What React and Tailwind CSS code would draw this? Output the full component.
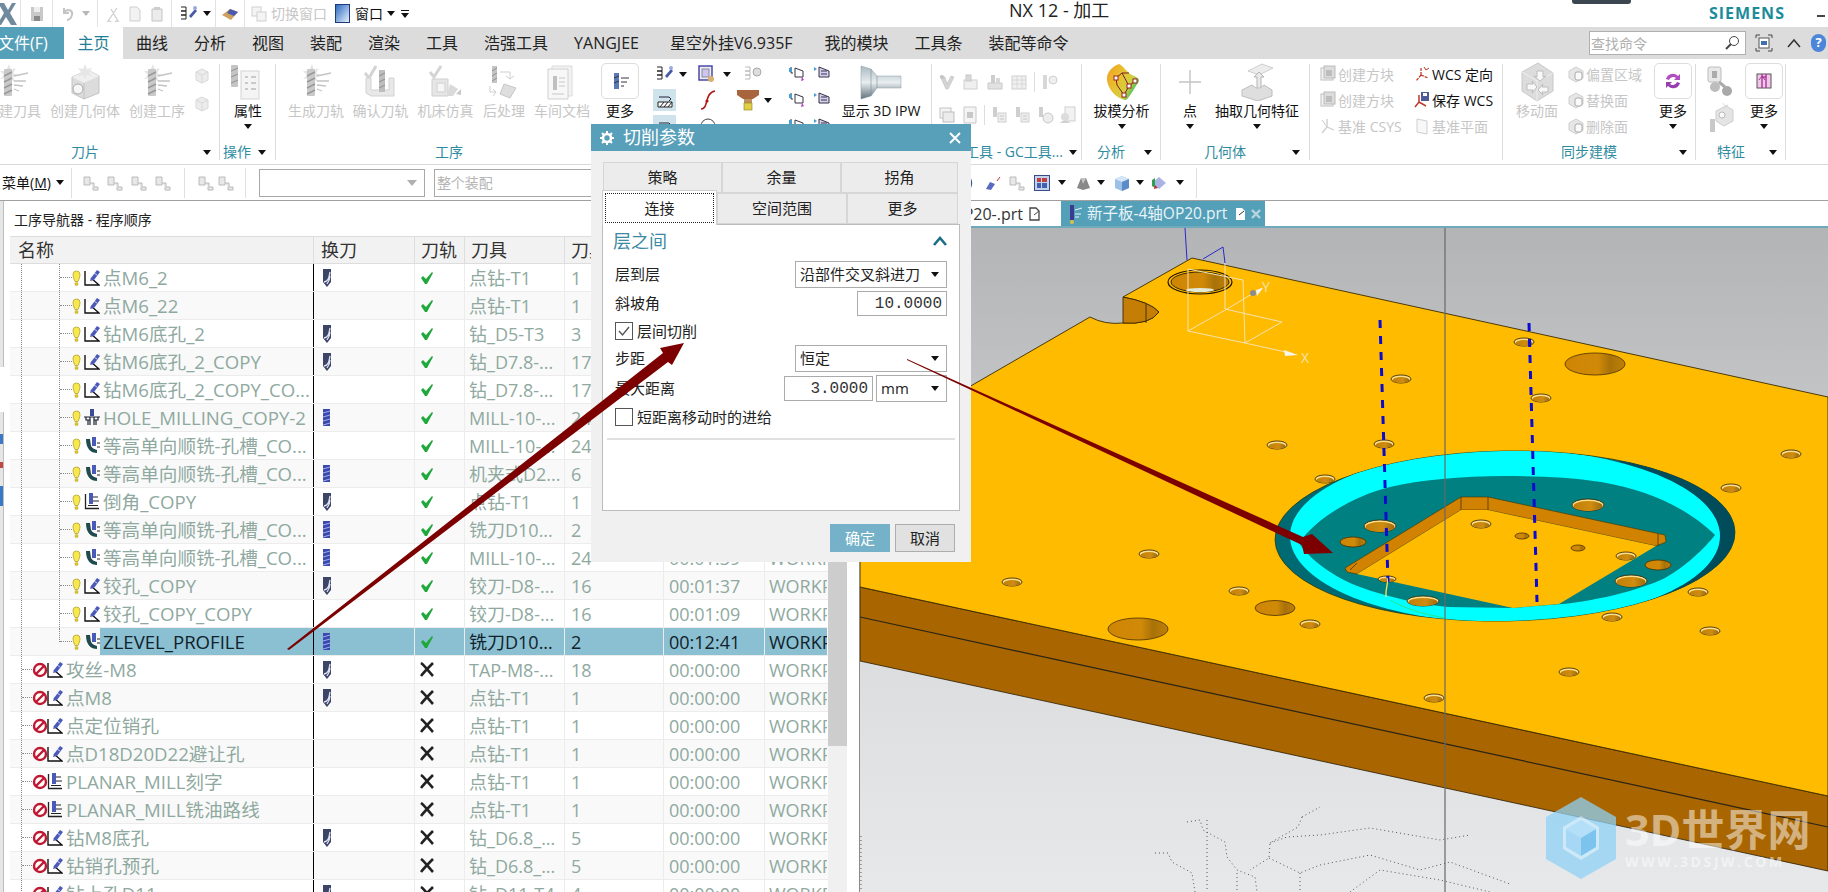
import React from 'react';

const Caret = ({ className = '' }) => (
  <span className={`inline-block shrink-0 w-0 h-0 border-x-[4px] border-x-transparent border-t-[5px] border-t-[#111] ${className}`} />
);

const S = ({ w = 16, h = 16, children }) => (
  <svg width={w} height={h} viewBox={`0 0 ${w} ${h}`} className="shrink-0 block">{children}</svg>
);

// ---- ribbon icons, most are greyed out ----
const ToolFlags = ({ spark }) => (
  <S w={36} h={36}>
    {spark && <path d="M14 0l2 6 5-2-3 5 5 2-5 2 2 5-5-3-3 5-1-6-6 1 4-4-4-4 6 0z" fill="#e4e4e4" />}
    <rect x="9" y="5" width="8" height="27" rx="1" fill="#c9c9c9" />
    <path d="M9 12l8-4M9 18l8-4M9 24l8-4M9 30l8-4" stroke="#999" strokeWidth="1.4" />
    <path d="M19 12l14-3M19 17h12M19 21l9 1M19 25l5 2" stroke="#c4c4c4" strokeWidth="1.3" fill="none" />
  </S>
);
const GeoBox = () => (
  <S w={36} h={36}>
    <path d="M5 13l16-7 11 6v17l-15 6-12-6z" fill="#dcdcdc" stroke="#c4c4c4" />
    <path d="M21 6l11 6-15 7-12-6z" fill="#efefef" />
    <path d="M17 19v16" stroke="#c4c4c4" />
    <circle cx="11" cy="25" r="5" fill="#f6f6f6" stroke="#aaa" />
    <path d="M18 0l2 5 5-1-3 4 3 4-5-1-2 4-2-4-5 1 3-4-3-4 5 1z" fill="#e6e6e6" />
  </S>
);
const ToolCheck = () => (
  <S w={36} h={36}>
    <path d="M2 9l4 5 7-12" stroke="#d4d4d4" strokeWidth="3" fill="none" />
    <path d="M3 14h5v12h18V14h5v18H8l-5-3z" fill="#e8e8e8" stroke="#d2d2d2" />
    <rect x="16" y="6" width="6" height="22" fill="#bdbdbd" />
    <path d="M16 12l6-3M16 18l6-3M16 24l6-3" stroke="#8d8d8d" />
  </S>
);
const Machine = () => (
  <S w={36} h={36}>
    <path d="M2 8l4 5 7-11" stroke="#d4d4d4" strokeWidth="3" fill="none" />
    <path d="M4 15h16v17H4z" fill="#e6e6e6" stroke="#cfcfcf" />
    <rect x="9" y="19" width="8" height="9" fill="#f5f5f5" stroke="#cfcfcf" />
    <path d="M22 20l8 5-5 7h-6z" fill="#dadada" />
    <path d="M28 30l5-5v6z" fill="#c8c8c8" />
  </S>
);
const PostProc = () => (
  <S w={36} h={36}>
    <rect x="6" y="2" width="5" height="17" fill="#c4c4c4" />
    <path d="M6 7l5-3M6 12l5-3M6 17l5-3" stroke="#919191" />
    <path d="M14 8h10v7M20 12l4 3 4-3" stroke="#cfcfcf" fill="none" />
    <path d="M18 20l12 4-6 10-10-4z" fill="#dedede" stroke="#c8c8c8" />
    <path d="M4 22v6h6M7 32l3-4-3-3" stroke="#cfcfcf" fill="none" />
  </S>
);
const DocIcon = () => (
  <S w={36} h={36}>
    <path d="M8 2h20v30H8z" fill="#f3f3f3" stroke="#dadada" />
    <path d="M4 5h20v30H4z" fill="#f7f7f7" stroke="#d0d0d0" />
    <rect x="9" y="12" width="4" height="14" fill="#c0c0c0" />
    <path d="M15 14h6M15 18h6M15 22h6M8 30h12" stroke="#c8c8c8" />
  </S>
);
const PropIcon = () => (
  <S w={36} h={36}>
    <rect x="1" y="1" width="7" height="22" rx="1" fill="#c4c4c4" />
    <path d="M1 7l7-3M1 13l7-3M1 19l7-3" stroke="#919191" />
    <rect x="11" y="7" width="18" height="28" fill="#f4f4f4" stroke="#d4d4d4" />
    <path d="M15 13h3M21 13h5M15 19h3M21 19h5M15 25h3M21 25h5" stroke="#bcbcbc" strokeWidth="1.5" />
  </S>
);
const MiniBox = ({ c = '#d8d8d8' }) => (
  <S w={18} h={18}>
    <path d="M3 6l6-3 6 3v8l-6 3-6-3z" fill="#ececec" stroke={c} />
    <path d="M3 6l6 3 6-3M9 9v8" stroke={c} fill="none" />
  </S>
);
// small disabled icons of the GC tools group
const GrayV = () => (
  <S w={18} h={18}><path d="M2 3l5 1 2 7 4-8 3 1-6 12H8z" fill="#d4d4d4" stroke="#bebebe" strokeWidth="0.6" /><circle cx="4" cy="4" r="2" fill="#c4c4c4" /></S>
);
const GrayStack = () => (
  <S w={18} h={18}><rect x="2" y="7" width="13" height="9" fill="#efefef" stroke="#d0d0d0" /><rect x="4" y="2" width="5" height="6" fill="#d8d8d8" stroke="#c8c8c8" /></S>
);
const GrayClamp = () => (
  <S w={18} h={18}><path d="M2 10h14v6H2z" fill="#e2e2e2" stroke="#c8c8c8" /><rect x="5" y="2" width="4" height="8" fill="#cdcdcd" /><rect x="10" y="5" width="4" height="5" fill="#d8d8d8" /></S>
);
const GrayTable = () => (
  <S w={18} h={18}><rect x="2" y="3" width="14" height="13" fill="#f0f0f0" stroke="#cfcfcf" /><path d="M2 7h14M2 11h14M7 3v13M12 3v13" stroke="#d8d8d8" /></S>
);
const GrayTool = () => (
  <S w={18} h={18}><rect x="2" y="2" width="4" height="14" fill="#d8d8d8" /><circle cx="12" cy="7" r="4" fill="#efefef" stroke="#cfcfcf" /></S>
);
const GrayCopy = () => (
  <S w={18} h={18}><rect x="2" y="2" width="11" height="10" fill="#f4f4f4" stroke="#c4c4c4" /><rect x="5" y="6" width="11" height="10" fill="#ececec" stroke="#bdbdbd" /></S>
);
const GrayPage = () => (
  <S w={18} h={18}><path d="M3 1h12v16H3z" fill="#f4f4f4" stroke="#c8c8c8" /><rect x="6" y="6" width="6" height="6" fill="#c8c8c8" /></S>
);
const GrayMach = () => (
  <S w={18} h={18}><rect x="3" y="1" width="4" height="10" fill="#cfcfcf" /><rect x="8" y="7" width="8" height="9" fill="#ededed" stroke="#d0d0d0" /><path d="M10 10h4M10 13h4" stroke="#c8c8c8" /></S>
);
const GrayClock = () => (
  <S w={18} h={18}><rect x="3" y="1" width="4" height="10" fill="#cfcfcf" /><circle cx="12" cy="12" r="5" fill="#ededed" stroke="#c8c8c8" /></S>
);
const GrayPeople = () => (
  <S w={18} h={18}><rect x="6" y="1" width="10" height="14" fill="#f2f2f2" stroke="#cfcfcf" /><circle cx="6" cy="11" r="4" fill="#dcdcdc" /><path d="M1 17c2-3 8-3 10 0" fill="#d0d0d0" /></S>
);
const GrayCube = () => (
  <S w={18} h={18}>
    <rect x="2" y="3" width="12" height="12" fill="#f2f2f2" stroke="#c0c0c0" />
    <rect x="5" y="1" width="11" height="12" fill="#dcdcdc" stroke="#bbb" />
    <rect x="7" y="5" width="6" height="6" fill="#bdbdbd" />
  </S>
);
const Csys = ({ on }) => (
  <S w={18} h={18}>
    <path d="M8 10V2M8 10l7 3M8 10l-5 6" stroke={on ? '#c0392b' : '#cdcdcd'} strokeWidth="1.3" strokeDasharray={on ? '3 1' : '0'} fill="none" />
    {on && <path d="M11 2l2 3 3-2" stroke="#c0392b" fill="none" />}
    {!on && <path d="M3 3l5 7" stroke="#cdcdcd" />}
  </S>
);
const SaveWcs = () => (
  <S w={18} h={18}>
    <path d="M6 11V4M6 11l7 4M6 11l-4 5" stroke="#c0392b" strokeWidth="1.5" fill="none" />
    <rect x="8" y="1" width="8" height="9" fill="#4c5a9a" />
    <rect x="10" y="2" width="4" height="3" fill="#fff" />
  </S>
);
const PlaneIcon = () => (
  <S w={18} h={18}>
    <path d="M4 2l10 2v13l-10-2z" fill="#f8f8f8" stroke="#cfcfcf" />
  </S>
);
const FaceIcon = () => (
  <S w={18} h={18}>
    <path d="M2 6l7-4 7 4v7l-7 4-7-4z" fill="#e6e6e6" stroke="#cfcfcf" />
    <rect x="8" y="7" width="7" height="8" rx="2" fill="#fafafa" stroke="#aaa" />
  </S>
);
const MoveFace = () => (
  <S w={36} h={42}>
    <path d="M3 11L19 2l15 10v18L18 40 3 30z" fill="#dcdcdc" stroke="#c8c8c8" />
    <path d="M3 11l15 9 16-8M18 20v20" stroke="#eee" fill="none" />
    <path d="M22 12v6l-3-1 6 5 6-5-3 1v-6zM12 25h6l-1-3 5 6-5 6 1-3h-6zM33 28h-6l1-3-5 6 5 5-1-3h6z" fill="#f8f8f8" stroke="#bdbdbd" transform="translate(-4 -2) scale(1)" />
  </S>
);
const Binoc = () => (
  <S w={30} h={34}>
    <rect x="3" y="3" width="13" height="15" rx="2" fill="#e8e8e8" stroke="#bcbcbc" />
    <rect x="7" y="7" width="5" height="7" fill="#ababab" />
    <circle cx="10" cy="23" r="5" fill="#bdbdbd" />
    <circle cx="22" cy="27" r="5" fill="#a9a9a9" />
    <path d="M14 18l6 5" stroke="#aaa" strokeWidth="3" />
  </S>
);
const PurpleRefresh = () => (
  <S w={20} h={20}>
    <path d="M3 8a7 7 0 0 1 12-3l2-2v6h-6l2-2a4.500 4.500 0 0 0-7 2z" fill="#b04fc0" />
    <path d="M17 12a7 7 0 0 1-12 3l-2 2v-6h6l-2 2a4.500 4.500 0 0 0 7-2z" fill="#9a3fb0" />
  </S>
);
const PinkBox = () => (
  <S w={20} h={20}>
    <rect x="3" y="3" width="14" height="14" fill="#f3c7ea" stroke="#555" />
    <path d="M8 17V6M12 17V6M8 3v3h4V3" stroke="#a33a96" strokeWidth="1.4" fill="none" />
    <path d="M5 9l3-4 3 4" stroke="#a33a96" fill="none" />
  </S>
);
const Rainbow = () => (
  <S w={36} h={38}>
    <defs>
      <linearGradient id="draft" x1="0" y1="0" x2="1" y2="0.6">
        <stop offset="0" stopColor="#f0a020" />
        <stop offset="0.45" stopColor="#e8c030" />
        <stop offset="0.75" stopColor="#d0d040" />
        <stop offset="1" stopColor="#30c060" />
      </linearGradient>
    </defs>
    <path d="M15 1c5 2 7 8 13 11 4 2 7 3 7 6-5 8-10 17-13 19C12 36 2 24 3 14 4 8 9 3 15 1z" fill="url(#draft)" />
    <path d="M12 15l6-5 7 13-5 9-7-10zM18 10l7 0M25 23l6-5" stroke="#7a2020" fill="none" />
    <g fill="#fff" stroke="#a02020">
      <rect x="10" y="13" width="4" height="4" /><rect x="23" y="21" width="4" height="4" /><rect x="18" y="30" width="4" height="4" /><rect x="29" y="16" width="4" height="4" />
    </g>
  </S>
);
const Extract = () => (
  <S w={34} h={38}>
    <path d="M8 8L22 1l11 4-14 7z" fill="#ececec" stroke="#cfcfcf" />
    <path d="M17 26V14h-3l5-5 5 5h-3v12z" fill="#e9e9e9" stroke="#b4b4b4" />
    <path d="M2 27l10-5 4 3h4l4-3 8 5v6l-14 5-16-5z" fill="#dedede" stroke="#bdbdbd" />
  </S>
);
const Ipw = () => (
  <S w={44} h={40}>
    <defs>
      <linearGradient id="ipw" x1="0" y1="0" x2="0" y2="1">
        <stop offset="0" stopColor="#a8b8c0" /><stop offset="0.5" stopColor="#e8eef0" /><stop offset="1" stopColor="#60707a" />
      </linearGradient>
    </defs>
    <path d="M2 4l10 3 6 7h24v12H18l-6 8-10 3z" fill="url(#ipw)" stroke="#8a9aa2" strokeWidth="0.5" />
    <path d="M12 7v27M18 14v12" stroke="#7e8e96" strokeWidth="0.6" />
  </S>
);

const Mini = ({ kind }) => {
  if (kind === 'tree') return (
    <S w={20} h={18}><path d="M2 3h6v8H2zM8 9h4v4h4v3h-5v-3" fill="#e8e8e8" stroke="#b4b4b4" strokeWidth="0.9" /></S>
  );
  if (kind === 'bolt') return (
    <S w={20} h={18}>
      <path d="M2 2h5v4H2M2 6h5v4H2M2 10h5v4H2" stroke="#222" fill="none" />
      <path d="M10 11l6-7 2 2-6 7z" fill="#4a5aa8" /><circle cx="16" cy="3" r="2" fill="#9aa8e0" />
    </S>
  );
  if (kind === 'boltg') return (
    <S w={20} h={18}>
      <path d="M2 2h5v4H2M2 6h5v4H2M2 10h5v4H2" stroke="#bbb" fill="none" />
      <circle cx="14" cy="7" r="4" fill="#ddd" stroke="#aaa" />
    </S>
  );
  if (kind === 'frame') return (
    <S w={20} h={20}>
      <rect x="2" y="2" width="13" height="14" fill="#eee" stroke="#4a4aa8" strokeWidth="1.5" />
      <rect x="5" y="5" width="7" height="8" fill="#cfc5ea" stroke="#88a" />
      <circle cx="14" cy="15" r="3" fill="#d8b070" />
    </S>
  );
  if (kind === 'hatch') return (
    <S w={18} h={18}>
      <path d="M3 6h10l2 2-2 2" stroke="#223" fill="none" />
      <path d="M2 11h14v5H2z" fill="#fff" stroke="#222" />
      <path d="M4 16l4-5M8 16l4-5M12 16l4-5" stroke="#222" />
    </S>
  );
  if (kind === 'curve') return (
    <S w={20} h={22}>
      <path d="M3 20c8 0 3-16 14-18" stroke="#b01818" strokeWidth="1.6" fill="none" />
      <circle cx="9" cy="12" r="1.6" fill="#b01818" />
    </S>
  );
  if (kind === 'mush') return (
    <S w={26} h={24}>
      <path d="M2 2h22v5l-6 4H8L2 7z" fill="#a8643c" />
      <rect x="9" y="11" width="8" height="4" fill="#c09060" />
      <rect x="9" y="15" width="8" height="7" fill="#e0d048" stroke="#8a8020" strokeWidth="0.6" />
    </S>
  );
  if (kind === 'flag') return (
    <S w={20} h={18}>
      <path d="M3 2v6h2M7 3l8 3v6H7z" fill="#fff" stroke="#334" />
      <path d="M1 3h3v4H1z" fill="#48a0d0" />
      <path d="M14 12l2 3-3 1z" fill="#b040c0" />
    </S>
  );
  if (kind === 'flagd') return (
    <S w={20} h={18}>
      <path d="M1 2l3 2-3 2z" fill="#48a0d0" />
      <path d="M6 2l10 4v6H6z" fill="#d8d0f0" stroke="#334" />
      <path d="M8 6h6M8 9h6" stroke="#334" />
    </S>
  );
  return null;
};

const BigBtn = ({ className = '', label, off, caret, box, children }) => (
  <div className={`flex flex-col items-center shrink-0 ${className}`}>
    <div className={`flex items-center justify-center h-[36px] ${box ? 'w-[38px] -mt-[1px] mb-[1px] border border-[#dddddd] rounded-[5px]' : ''}`}>{children}</div>
    <div className={`h-[21px] text-[14px] leading-[21px] whitespace-nowrap ${off ? 'text-[#c6c6c6]' : 'text-[#111]'}`}>{label}</div>
    {caret && <Caret className="mt-[3px]" />}
  </div>
);

const SmallRow = ({ icon, label, off }) => (
  <div className="flex items-center h-[26px]">
    <div className="w-[21px] flex justify-center -ml-[1px]">{icon}</div>
    <span className={`text-[14px] whitespace-nowrap ${off ? 'text-[#c6c6c6]' : 'text-[#111]'}`}>{label}</span>
  </div>
);

const Group = ({ className = '', label, labelClass = '', caretClass = '', noBorder, children }) => (
  <div className={`flex flex-col shrink-0 h-[96px] mt-[5px] ${noBorder ? '' : 'border-r border-[#dcdcdc]'} ${className}`}>
    <div className="flex h-[80px]">{children}</div>
    <div className="flex items-center h-[16px] overflow-hidden">
      {label && <span className={`text-[14px] leading-[16px] whitespace-nowrap text-[#2f8ca0] ${labelClass}`}>{label}</span>}
      {caretClass && <Caret className={caretClass} />}
    </div>
  </div>
);

const Sep = () => <span className="w-px h-[20px] bg-[#dddddd] shrink-0" />;

const TitleBar = () => (
  <div className="relative flex items-center h-[27px] bg-white">
    <div className="flex items-center w-[21px] h-[27px] shrink-0 border-r border-[#e2e2e2]">
      <S w={20} h={24}><path d="M-2 1h6l4 7 4-7h4l-6 10 7 12h-6l-5-8-5 8H-3l7-12z" fill="#6e8a9c" /></S>
    </div>
    <div className="w-[32px] flex justify-center border-r border-[#e2e2e2] h-[27px] items-center">
      <S w={16} h={16}><path d="M2 1h12v14H2z" fill="#c8c8c8" /><rect x="5" y="1" width="6" height="5" fill="#eee" /><rect x="5" y="10" width="6" height="5" fill="#888" /></S>
    </div>
    <div className="w-[45px] flex items-center gap-[8px] pl-[7px] border-r border-[#e2e2e2] h-[27px]">
      <S w={14} h={14}><path d="M4 5c5-4 9-1 8 3-1 3-3 5-5 5M4 1v5h5" stroke="#c4c4c4" strokeWidth="2" fill="none" /></S>
      <Caret className="opacity-30" />
    </div>
    <div className="w-[74px] flex items-center gap-[8px] pl-[8px] border-r border-[#e2e2e2] h-[27px]">
      <S w={14} h={16}><path d="M2 15L11 2M12 15L5 3M3 15a2 2 0 1 0 .1 0M11 15a2 2 0 1 0 .1 0" stroke="#cfcfcf" strokeWidth="1.3" fill="none" /></S>
      <S w={14} h={16}><path d="M2 1h7l3 3v11H2z" fill="#f2f2f2" stroke="#cfcfcf" /></S>
      <S w={14} h={16}><path d="M2 3h10v12H2z" fill="#ececec" stroke="#c4c4c4" /><rect x="4" y="1" width="6" height="3" fill="#ccc" /></S>
    </div>
    <div className="w-[44px] flex items-center pl-[7px] gap-[4px] border-r border-[#e2e2e2] h-[27px]">
      <Mini kind="bolt" /><Caret />
    </div>
    <div className="w-[29px] flex justify-center border-r border-[#e2e2e2] h-[27px] items-center">
      <S w={18} h={16}><path d="M1 9l8-6 8 3-7 8z" fill="#d0a060" /><path d="M9 3l8 3-4 4-7-3z" fill="#4a5ab0" /></S>
    </div>
    <div className="flex items-center pl-[6px]">
      <S w={16} h={16}><rect x="1" y="1" width="9" height="9" fill="#f4f4f4" stroke="#cfcfcf" /><rect x="6" y="6" width="9" height="9" fill="#f4f4f4" stroke="#cfcfcf" /></S>
      <span className="ml-[4px] text-[14px] text-[#c6c6c6] whitespace-nowrap">切换窗口</span>
      <span className="ml-[8px] w-[15px] h-[19px] border border-[#1c3a78] bg-linear-to-br from-[#2a6ac0] to-[#e8f0fa] shrink-0" />
      <span className="ml-[5px] text-[14px] text-[#111] whitespace-nowrap">窗口</span>
      <Caret className="ml-[4px]" />
      <span className="ml-[6px] flex flex-col items-center gap-[2px]"><span className="w-[8px] h-px bg-[#111]" /><Caret /></span>
    </div>
    <span className="absolute left-[1009px] top-[-3px] text-[18px] text-[#222] whitespace-nowrap">NX 12 - 加工</span>
    <span className="absolute left-[1572px] top-0 w-[59px] h-[4px] bg-[#3c4650] rounded-b-[3px]" />
    <span className="absolute left-[1709px] top-[1px] text-[16px] font-bold text-[#1b8c9c] tracking-[1px]">SIEMENS</span>
    <span className="absolute left-[1817px] top-[15px] w-[8px] h-[2px] bg-[#444]" />
  </div>
);

const TabBar = () => {
  const tabs = ['曲线', '分析', '视图', '装配', '渲染', '工具', '浩强工具'];
  return (
    <div className="flex items-center h-[32px] bg-[#dcdcdc] relative">
      <div className="w-[64px] h-[32px] bg-[#55a0b9] text-white text-[16px] leading-[32px] whitespace-nowrap overflow-hidden shrink-0"><span className="-ml-[2px] inline-block">文件(F)</span></div>
      <div className="w-[59px] h-[32px] bg-white text-[#1f7f96] text-[16px] leading-[32px] text-center shrink-0">主页</div>
      {tabs.map((t) => (
        <div key={t} className="px-[13px] text-[16px] text-[#222] whitespace-nowrap">{t}</div>
      ))}
      <div className="pl-[13px] pr-[18px] text-[16px] text-[#222] whitespace-nowrap">YANGJEE</div>
      <div className="pl-[13px] pr-[19px] text-[16px] text-[#222] whitespace-nowrap">星空外挂V6.935F</div>
      <div className="px-[13px] text-[16px] text-[#222] whitespace-nowrap">我的模块</div>
      <div className="px-[13px] text-[16px] text-[#222] whitespace-nowrap">工具条</div>
      <div className="px-[13px] text-[16px] text-[#222] whitespace-nowrap">装配等命令</div>
      <div className="ml-auto flex items-center">
        <div className="w-[157px] h-[24px] bg-white border border-[#b0b0b0] flex items-center justify-between pl-[1px] pr-[5px]">
          <span className="text-[14px] text-[#b0b0b0]">查找命令</span>
          <S w={16} h={16}><circle cx="10" cy="6" r="4.500" fill="#fff" stroke="#444" /><path d="M7 9l-5 5" stroke="#444" strokeWidth="2" /></S>
        </div>
        <div className="w-[18px] ml-[9px]">
          <S w={18} h={18}><path d="M1 4V1h4M13 1h4v3M1 14v3h4M13 17h4v-3" stroke="#444" fill="none" /><rect x="4" y="4" width="10" height="10" fill="#fff" stroke="#555" /><rect x="6" y="7" width="6" height="4" fill="#3f6fae" /></S>
        </div>
        <div className="w-[16px] ml-[13px]">
          <S w={16} h={14}><path d="M2 11l6-7 6 7" stroke="#333" strokeWidth="1.500" fill="none" /></S>
        </div>
        <div className="ml-[9px] mr-[2px] w-[15px] h-[18px] rounded-full bg-[#4d86d8] text-white text-[13px] font-bold flex items-center justify-center">?</div>
      </div>
    </div>
  );
};

const Ribbon = () => (
  <div className="flex h-[106px] bg-white border-b border-[#d8d8d8] overflow-hidden">
    <Group className="w-[220px]" label="刀片" labelClass="ml-[71px]" caretClass="ml-[104px]">
      <BigBtn className="w-[70px] -ml-[22px]" label="创建刀具" off><ToolFlags spark /></BigBtn>
      <BigBtn className="w-[74px]" label="创建几何体" off><GeoBox /></BigBtn>
      <BigBtn className="w-[70px]" label="创建工序" off><ToolFlags spark /></BigBtn>
      <div className="w-[20px] flex flex-col items-center gap-[10px] pt-[2px]"><MiniBox /><MiniBox /></div>
    </Group>
    <Group className="w-[56px]" label="操作" labelClass="ml-[3px]" caretClass="ml-[7px]">
      <BigBtn className="w-[56px]" label="属性" caret><PropIcon /></BigBtn>
    </Group>
    <Group className="w-[369px]" noBorder label="工序" labelClass="ml-[159px]">
      <BigBtn className="w-[64px] ml-[8px]" label="生成刀轨" off><ToolFlags spark /></BigBtn>
      <BigBtn className="w-[65px]" label="确认刀轨" off><ToolCheck /></BigBtn>
      <BigBtn className="w-[65px]" label="机床仿真" off><Machine /></BigBtn>
      <BigBtn className="w-[52px]" label="后处理" off><PostProc /></BigBtn>
      <BigBtn className="w-[64px]" label="车间文档" off><DocIcon /></BigBtn>
      <BigBtn className="w-[38px] ml-[7px]" label="更多" box><S w={20} h={20}><rect x="4" y="2" width="5" height="16" fill="#5a78b8" /><path d="M4 7l5-2M4 12l5-2M11 7h8M11 11h6M11 15h3" stroke="#334" /></S></BigBtn>
    </Group>
    <Group className="w-[287px]" label="">
      <div className="w-[125px] ml-[8px] flex flex-col -mt-[3px]">
        <div className="flex items-center h-[26px]">
          <div className="w-[23px] flex justify-center"><Mini kind="bolt" /></div><Caret className="ml-[3px]" />
          <div className="w-[31px] ml-[4px] flex justify-center"><Mini kind="frame" /></div><Caret className="ml-[1px]" />
          <div className="w-[32px] ml-[6px] flex justify-center"><Mini kind="boltg" /></div>
        </div>
        <div className="flex items-center h-[26px]">
          <div className="w-[23px] h-[22px] bg-[#cfe3ec] flex justify-center items-center"><Mini kind="hatch" /></div>
          <div className="w-[42px] ml-[11px] flex justify-center"><Mini kind="curve" /></div>
          <div className="w-[30px] ml-[4px] flex justify-center"><Mini kind="mush" /></div><Caret className="ml-[1px]" />
        </div>
        <div className="flex items-center h-[26px]">
          <div className="w-[23px] h-[22px] bg-[#cfe3ec] flex justify-center items-center"><Mini kind="hatch" /></div>
          <div className="w-[42px] ml-[11px] flex justify-center"><S w={18} h={18}><circle cx="9" cy="9" r="7" fill="#fff" stroke="#444" /></S></div>
        </div>
      </div>
      <div className="w-[50px] ml-[10px] flex flex-col -mt-[3px]">
        <div className="flex items-center h-[26px] gap-[5px]"><Mini kind="flag" /><Mini kind="flagd" /></div>
        <div className="flex items-center h-[26px] gap-[5px]"><Mini kind="flag" /><Mini kind="flagd" /></div>
        <div className="flex items-center h-[26px] gap-[5px]"><Mini kind="flag" /><Mini kind="flagd" /></div>
      </div>
      <BigBtn className="w-[90px] -ml-[2px]" label="显示 3D IPW"><Ipw /></BigBtn>
    </Group>
    <Group className="w-[150px]" label="工具 - GC工具..." labelClass="ml-[33px]" caretClass="ml-[6px]">
      <div className="flex flex-col pl-[6px] pt-[8px] gap-[13px]">
        <div className="flex items-center gap-[6px]">
          <GrayV /><GrayStack /><GrayClamp /><GrayTable /><Sep /><GrayTool />
        </div>
        <div className="flex items-center gap-[5px]">
          <GrayCopy /><GrayPage /><Sep /><GrayMach /><GrayMach /><GrayClock /><GrayPeople />
        </div>
      </div>
    </Group>
    <Group className="w-[79px]" label="分析" labelClass="ml-[15px]" caretClass="ml-[19px]">
      <BigBtn className="w-[79px]" label="拔模分析" caret><Rainbow /></BigBtn>
    </Group>
    <Group className="w-[149px]" label="几何体" labelClass="ml-[43px]" caretClass="ml-[46px]">
      <BigBtn className="w-[58px]" label="点" caret><S w={24} h={32}><path d="M12 4v24M1 16h22" stroke="#c4c4c4" strokeWidth="1.4" /></S></BigBtn>
      <BigBtn className="w-[76px]" label="抽取几何特征" caret><Extract /></BigBtn>
    </Group>
    <Group className="w-[193px]">
      <div className="flex -mt-[3px] ml-[8px]">
        <div className="w-[94px] flex flex-col">
          <SmallRow icon={<GrayCube />} label="创建方块" off />
          <SmallRow icon={<GrayCube />} label="创建方块" off />
          <SmallRow icon={<Csys />} label="基准 CSYS" off />
        </div>
        <div className="flex flex-col">
          <SmallRow icon={<Csys on />} label="WCS 定向" />
          <SmallRow icon={<SaveWcs />} label="保存 WCS" />
          <SmallRow icon={<PlaneIcon />} label="基准平面" off />
        </div>
      </div>
    </Group>
    <Group className="w-[193px]" label="同步建模" labelClass="ml-[58px]" caretClass="ml-[62px]">
      <BigBtn className="w-[60px] ml-[4px]" label="移动面" off><MoveFace /></BigBtn>
      <div className="w-[89px] -ml-[1px] -mt-[3px] flex flex-col">
        <SmallRow icon={<FaceIcon />} label="偏置区域" off />
        <SmallRow icon={<FaceIcon />} label="替换面" off />
        <SmallRow icon={<FaceIcon />} label="删除面" off />
      </div>
      <BigBtn className="w-[40px] -ml-[2px]" label="更多" box caret><PurpleRefresh /></BigBtn>
    </Group>
    <Group className="w-[90px]" label="特征" labelClass="ml-[21px]" caretClass="ml-[24px]">
      <div className="w-[48px] flex flex-col items-center"><Binoc /><div className="mt-[3px]"><GeoBoxSmall /></div></div>
      <BigBtn className="w-[40px]" label="更多" box caret><PinkBox /></BigBtn>
    </Group>
  </div>
);

const GeoBoxSmall = () => (
  <S w={28} h={32}>
    <path d="M10 10l10-5 7 4v11l-9 5-8-5z" fill="#e4e4e4" stroke="#cdcdcd" />
    <circle cx="16" cy="14" r="3" fill="#fafafa" stroke="#bbb" />
    <rect x="4" y="18" width="5" height="13" fill="#c8c8c8" />
    <path d="M17 2l2 3 3-1-2 3" stroke="#ddd" fill="none" />
  </S>
);

const Toolbar = () => (
  <div className="flex items-center h-[36px] bg-white border-b border-[#a0a0a0]">
    <span className="ml-[2px] text-[14px] text-[#111] whitespace-nowrap">菜单(<span className="underline">M</span>)</span>
    <Caret className="ml-[5px]" />
    <span className="ml-[7px] w-px h-[30px] bg-[#e0e0e0]" />
    <div className="flex gap-[4px] ml-[10px]"><Mini kind="tree" /><Mini kind="tree" /><Mini kind="tree" /><Mini kind="tree" /></div>
    <span className="ml-[10px] w-px h-[30px] bg-[#e0e0e0]" />
    <div className="flex gap-[0px] ml-[12px]"><Mini kind="tree" /><Mini kind="tree" /></div>
    <span className="ml-[8px] w-px h-[30px] bg-[#e0e0e0]" />
    <div className="ml-[13px] w-[166px] h-[28px] border border-[#a8a8a8] flex items-center justify-end pr-[7px]"><span className="w-0 h-0 border-x-[5px] border-x-transparent border-t-[6px] border-t-[#b0b0b0]" /></div>
    <div className="ml-[9px] w-[200px] h-[28px] border border-[#a8a8a8] pl-[2px] text-[14px] text-[#b4b4b4] leading-[26px]">整个装配</div>
    <div className="ml-[326px] flex items-center">
      <div className="w-[18px] flex justify-center"><S w={12} h={16}><path d="M3 2c6 0 7 9 2 12" stroke="#3a5a90" strokeWidth="2" fill="none" /></S></div>
      <div className="w-[30px] flex justify-center"><S w={18} h={16}><path d="M2 14l4-7 5 2-4 6z" fill="#5a6ac0" /><path d="M13 6l3-4" stroke="#c03030" /></S></div>
      <Mini kind="tree" />
      <div className="w-[16px] h-[16px] ml-[6px] bg-[#c4d2ec] border border-[#384c8a] grid grid-cols-2 gap-px p-[2px]"><span className="bg-[#c04040]" /><span className="bg-[#c04040]" /><span className="bg-[#4060b0]" /><span className="bg-[#4060b0]" /></div>
      <Caret className="ml-[8px]" />
      <div className="ml-[8px]"><S w={18} h={16}><path d="M3 13l4-10h5l4 10-7 2z" fill="#888" /><path d="M7 3l5 0-3 6z" fill="#c4c4c4" /></S></div>
      <Caret className="ml-[5px]" />
      <div className="ml-[8px]"><S w={18} h={18}><path d="M2 5l7-3 7 3v9l-7 3-7-3z" fill="#9cc0e8" /><path d="M2 5l7 3 7-3-7-3z" fill="#d6e6f6" /><path d="M9 8v9l7-3V5z" fill="#5c8cc8" /></S></div>
      <Caret className="ml-[5px]" />
      <div className="ml-[6px]"><S w={18} h={16}><path d="M9 2l7 6-7 6-7-6z" fill="#aab4e4" /><path d="M2 5l3-2v10l-3-2z" fill="#30a050" /><path d="M5 10l3 3-4 1z" fill="#c03030" /></S></div>
      <Caret className="ml-[8px]" />
      <span className="ml-[12px] w-px h-[30px] bg-[#e0e0e0]" />
    </div>
  </div>
);

// ---- operation navigator ----
const Bulb = () => (
  <S w={9} h={16}><path d="M1 4.500a3.500 3.500 0 1 1 7 0c0 2-1 5-2 7H3c-1-2-2-5-2-7z" fill="#f8e850" stroke="#a89818" strokeWidth="0.7" /><circle cx="4.500" cy="14" r="1.600" fill="#e8c820" stroke="#a89818" strokeWidth="0.5" /></S>
);
const NoEntry = () => (
  <S w={16} h={16}><circle cx="8" cy="8" r="6" fill="#fff" stroke="#c01830" strokeWidth="2.400" /><path d="M3.500 12.500l9-9" stroke="#c01830" strokeWidth="2.400" /></S>
);
const OpIcon = ({ kind }) => {
  if (kind === 'hole') return (
    <S w={16} h={17}>
      <rect x="6" y="0" width="4" height="7" fill="#3a4a9a" />
      <path d="M0 8h16M2 8v3h4M14 8v3h-4M4 11v5M12 11v5M6 8v8M10 8v8" stroke="#1a2030" strokeWidth="1.200" fill="none" />
    </S>
  );
  if (kind === 'z') return (
    <S w={16} h={17}>
      <path d="M2 2h4l1 7c1 2 3 3 6 4v3c-6 0-11-4-11-14z" fill="#1f4a50" />
      <rect x="8" y="0" width="4" height="9" fill="#4a5ab8" />
      <path d="M13 6h3M13 10h3" stroke="#222" />
    </S>
  );
  if (kind === 'planar') return (
    <S w={16} h={17}>
      <path d="M1.500 1v14.500H15" stroke="#222" strokeWidth="1.300" fill="none" />
      <rect x="5" y="0" width="4" height="11" fill="#4a5ab8" />
      <path d="M9 4h5M9 8h6M4 12.500h10" stroke="#222" />
    </S>
  );
  return (
    <S w={16} h={17}>
      <path d="M1 2v14h14L7 9" stroke="#111" strokeWidth="1.400" fill="#fff" />
      <path d="M7 9L13 1l3 2-6 8-4 1z" fill="#4a5ab8" />
      <path d="M10 4l3 2" stroke="#c8d0f0" />
    </S>
  );
};
const ToolChange = ({ kind }) => {
  if (kind === 'mill') return (
    <S w={9} h={17}><rect x="1" y="0" width="7" height="17" fill="#3a48b0" /><path d="M1 4l7-2M1 8l7-2M1 12l7-2M1 16l7-2" stroke="#a0aee8" /></S>
  );
  return (
    <S w={10} h={18}><path d="M1 0h8v13l-4 5-4-5z" fill="#3c4468" /><path d="M2 13c5-1 5-5 6-10M5 15c2-3 3-6 3-8" stroke="#dfe3f2" strokeWidth="1.300" fill="none" /></S>
  );
};
const Check = () => (
  <S w={14} h={14}><path d="M1 7l2-2 3 3 6-7 1 1-6 11H5z" fill="#1fa83c" /></S>
);
const Cross = () => (
  <S w={14} h={15}><path d="M1 1c3 2 9 10 12 13M13 1C9 5 4 10 1 14" stroke="#222" strokeWidth="2.600" fill="none" /></S>
);

const rows = [
  { n: '点M6_2', i: 'drill', c: 'drill', t: '点钻-T1', q: '1', d: '00:00:11', nest: true, ok: true },
  { n: '点M6_22', i: 'drill', t: '点钻-T1', q: '1', d: '00:00:11', nest: true, ok: true },
  { n: '钻M6底孔_2', i: 'drill', c: 'drill', t: '钻_D5-T3', q: '3', d: '00:00:35', nest: true, ok: true },
  { n: '钻M6底孔_2_COPY', i: 'drill', c: 'drill', t: '钻_D7.8-...', q: '17', d: '00:00:35', nest: true, ok: true },
  { n: '钻M6底孔_2_COPY_CO...', i: 'drill', t: '钻_D7.8-...', q: '17', d: '00:00:35', nest: true, ok: true },
  { n: 'HOLE_MILLING_COPY-2', i: 'hole', c: 'mill', t: 'MILL-10-...', q: '24', d: '00:01:02', nest: true, ok: true },
  { n: '等高单向顺铣-孔槽_CO...', i: 'z', t: 'MILL-10-...', q: '24', d: '00:01:39', nest: true, ok: true },
  { n: '等高单向顺铣-孔槽_CO...', i: 'z', c: 'mill', t: '机夹式D2...', q: '6', d: '00:01:39', nest: true, ok: true },
  { n: '倒角_COPY', i: 'planar', c: 'drill', t: '点钻-T1', q: '1', d: '00:00:40', nest: true, ok: true },
  { n: '等高单向顺铣-孔槽_CO...', i: 'z', c: 'mill', t: '铣刀D10...', q: '2', d: '00:01:39', nest: true, ok: true },
  { n: '等高单向顺铣-孔槽_CO...', i: 'z', c: 'mill', t: 'MILL-10-...', q: '24', d: '00:01:39', nest: true, ok: true },
  { n: '铰孔_COPY', i: 'drill', c: 'drill', t: '铰刀-D8-...', q: '16', d: '00:01:37', nest: true, ok: true },
  { n: '铰孔_COPY_COPY', i: 'drill', t: '铰刀-D8-...', q: '16', d: '00:01:09', nest: true, ok: true },
  { n: 'ZLEVEL_PROFILE', i: 'z', c: 'mill', t: '铣刀D10...', q: '2', d: '00:12:41', nest: true, ok: true, sel: true },
  { n: '攻丝-M8', i: 'drill', c: 'drill', t: 'TAP-M8-...', q: '18' },
  { n: '点M8', i: 'drill', c: 'drill', t: '点钻-T1', q: '1' },
  { n: '点定位销孔', i: 'drill', t: '点钻-T1', q: '1' },
  { n: '点D18D20D22避让孔', i: 'drill', t: '点钻-T1', q: '1' },
  { n: 'PLANAR_MILL刻字', i: 'planar', t: '点钻-T1', q: '1' },
  { n: 'PLANAR_MILL铣油路线', i: 'planar', t: '点钻-T1', q: '1' },
  { n: '钻M8底孔', i: 'drill', c: 'drill', t: '钻_D6.8_...', q: '5' },
  { n: '钻销孔预孔', i: 'drill', t: '钻_D6.8_...', q: '5' },
  { n: '钻上孔D11', i: 'drill', c: 'drill', t: '钻_D11-T4', q: '4' },
];

const Row = ({ r, idx }) => {
  const txt = r.sel ? 'text-[#10222a]' : 'text-[#8fa9a0]';
  const cell = `h-full flex items-center border-r border-[#ececec] shrink-0 overflow-hidden ${r.sel ? 'bg-[#8bbfd2]' : ''}`;
  return (
    <div className={`flex h-[28px] shrink-0 border-b border-[#ececec] text-[18px] leading-[28px] whitespace-nowrap ${idx % 2 ? 'bg-[#f9f9f9]' : 'bg-white'}`}>
      <div className="w-[304px] h-full flex items-center shrink-0 border-r border-black overflow-hidden text-[18.600px]">
        {r.nest ? (
          <>
            <span className="w-[12px] h-full border-r border-dotted border-[#888] shrink-0" />
            <span className={`w-[38px] border-r border-dotted border-[#888] shrink-0 ${idx === 13 ? 'h-1/2 self-start' : 'h-full'}`} />
            <span className="w-[12px] border-t border-dotted border-[#888] shrink-0" />
            <Bulb />
            <span className="ml-[3px]"><OpIcon kind={r.i} /></span>
            <span className={`h-full flex-1 pl-[3px] ${r.sel ? 'bg-[#8bbfd2]' : ''} ${txt}`}>{r.n}</span>
          </>
        ) : (
          <>
            <span className="w-[12px] h-full border-r border-dotted border-[#888] shrink-0" />
            <span className="w-[10px] border-t border-dotted border-[#888] shrink-0" />
            <NoEntry />
            <span className="-ml-[1px]"><OpIcon kind={r.i} /></span>
            <span className={`pl-[3px] ${txt}`}>{r.n}</span>
          </>
        )}
      </div>
      <div className={`${cell} w-[101px] pl-[8px]`}>{r.c && <ToolChange kind={r.c} />}</div>
      <div className={`${cell} w-[50px] pl-[5px]`}>{r.ok ? <Check /> : <Cross />}</div>
      <div className={`${cell} w-[100px] pl-[4px] ${txt}`}>{r.t}</div>
      <div className={`${cell} w-[99px] pl-[6px] ${txt}`}>{r.q}</div>
      <div className={`${cell} w-[101px] pl-[5px] ${txt}`}>{r.d || '00:00:00'}</div>
      <div className={`${cell} w-[62px] pl-[4px] border-r-0 ${txt}`}>WORKPIECE</div>
    </div>
  );
};

const Navigator = () => (
  <div className="w-[860px] h-[691px] shrink-0 flex bg-white border-r border-[#8a8a8a] overflow-hidden">
    <div className="w-[10px] shrink-0 flex flex-col">
      <div className="w-[4px] h-[166px] bg-[#e6e6e6] border-r border-[#bdbdbd]" />
      <div className="h-[45px]" />
      <div className="w-[4px] h-[480px] bg-[#e6e6e6] border-r border-[#bdbdbd] flex flex-col gap-[18px] pt-[22px]">
        <span className="h-[10px] bg-[#3a78c8]" />
        <span className="h-[6px] bg-[#c04a40]" />
        <span className="h-[20px] bg-[#3a78c8]" />
      </div>
    </div>
    <div className="w-[818px] shrink-0 flex flex-col">
      <div className="h-[35px] shrink-0 pl-[4px] text-[14px] leading-[38px] text-[#222]">工序导航器 - 程序顺序</div>
      <div className="h-[28px] shrink-0 flex items-center bg-[#f2f2f2] border-y border-[#dddddd] text-[18px] text-[#333] whitespace-nowrap">
        <div className="w-[304px] pl-[8px] shrink-0 border-r border-[#dddddd]">名称</div>
        <div className="w-[101px] pl-[7px] shrink-0 border-r border-[#dddddd]">换刀</div>
        <div className="w-[50px] pl-[6px] shrink-0 border-r border-[#dddddd]">刀轨</div>
        <div className="w-[100px] pl-[6px] shrink-0 border-r border-[#dddddd]">刀具</div>
        <div className="w-[99px] pl-[6px] shrink-0 border-r border-[#dddddd]">刀具号</div>
        <div className="w-[101px] pl-[6px] shrink-0 border-r border-[#dddddd]">时间</div>
        <div className="w-[62px] pl-[4px] shrink-0">几何体</div>
      </div>
      {rows.map((r, i) => <Row key={i} r={r} idx={i} />)}
    </div>
    <div className="w-[19px] shrink-0 ml-0 mt-[63px] bg-[#f0f0f0] flex flex-col">
      <div className="h-[482px] bg-[#cdcdcd]" />
    </div>
  </div>
);

// ---- graphics window, coordinates are page pixels because of the viewBox ----
const Hole = ({ x, y, rx = 10, ry = 4 }) => (
  <g>
    <ellipse cx={x} cy={y} rx={rx} ry={ry} fill="#ffe08a" stroke="#2a1c00" strokeWidth="0.8" />
    <ellipse cx={x} cy={y + 1} rx={rx - 1.500} ry={ry - 1} fill="url(#holeG)" />
  </g>
);
const BigHole = ({ x, y, rx, ry }) => (
  <ellipse cx={x} cy={y} rx={rx} ry={ry} fill="url(#holeB)" stroke="#4a3000" strokeWidth="0.8" />
);

const Scene = () => (
  <svg width="968" height="664" viewBox="860 228 968 664" className="block">
    <defs>
      <linearGradient id="holeG" x1="0" y1="0" x2="1" y2="0">
        <stop offset="0" stopColor="#c08008" /><stop offset="0.6" stopColor="#d08c10" /><stop offset="1" stopColor="#9a6c10" />
      </linearGradient>
      <linearGradient id="holeB" x1="0" y1="0" x2="1" y2="0">
        <stop offset="0" stopColor="#cf8504" /><stop offset="0.55" stopColor="#d08a08" /><stop offset="0.75" stopColor="#a87208" /><stop offset="1" stopColor="#c08008" />
      </linearGradient>
      <clipPath id="outerClip"><ellipse cx="1505" cy="536" rx="230" ry="85" transform="rotate(-1 1505 536)" /></clipPath>
    </defs>

    {/* dotted leftovers on the background */}
    <g fill="none" stroke="#555" strokeWidth="1" strokeDasharray="1 3">
      <path d="M861 836V892" />
      <path d="M1187 822L1200 820 1203 830 1225 842 1227 857 1237 870 1255 877 1257 892" />
      <path d="M1302 817L1320 807M1302 817L1298 827 1270 843 1269 858 1250 870" />
      <path d="M1270 843L1287 837 1320 835 1370 828 1440 840 1470 835" />
      <path d="M1155 853L1168 853 1172 862 1192 873 1195 892" />
      <path d="M1237 873V892M1269 858L1300 873 1320 865 1370 855 1420 870 1450 862 1510 884" />
      <path d="M1300 873V892M1350 892L1380 870 1440 880 1490 892" />
      <path d="M1207 820L1207 892" />
    </g>

    {/* side of the plate */}
    <path d="M860 587L1828 796V871L860 661Z" fill="#a86500" stroke="#2a1c00" strokeWidth="0.8" />
    <path d="M860 617L1828 827" stroke="#2a2418" strokeWidth="1.200" />

    {/* top face */}
    <path d="M860 450L1090 317Q1105 325 1123 323Q1150 325 1159 312Q1150 302 1123 297L1192 258L1828 397V796L860 587Z" fill="#ffbb00" stroke="#3a2a00" strokeWidth="0.9" />
    <path d="M1123 297Q1150 302 1159 312Q1150 325 1123 323Z" fill="#c47e06" stroke="#2a1c00" strokeWidth="0.8" />
    <path d="M1146 304V323" stroke="#2a1c00" strokeWidth="0.8" />

    <ellipse cx="1200" cy="282" rx="32" ry="12" fill="#ffbb00" stroke="#1a1200" strokeWidth="1.200" />
    <ellipse cx="1200" cy="282" rx="29" ry="10" fill="url(#holeB)" stroke="#3a2a00" />
    <ellipse cx="1200" cy="290" rx="14" ry="2" fill="#e4ead8" />

    {/* circular pocket */}
    <ellipse cx="1505" cy="536" rx="230" ry="85" fill="#006a72" stroke="#2a3a10" strokeWidth="0.8" transform="rotate(-1 1505 536)" />
    <g clipPath="url(#outerClip)">
      <rect x="1620" y="440" width="120" height="190" fill="#004c5a" />
      <ellipse cx="1505" cy="536" rx="215" ry="87" fill="#00ffff" />
    </g>
    <path d="M1715 535C1690 510 1650 490 1601 482C1570 477 1535 476 1505 476C1460 476 1420 480 1390 487C1350 497 1315 520 1299 543C1310 560 1335 578 1360 587C1390 598 1420 604 1448 607L1513 608L1563 604C1600 600 1640 590 1665 578C1685 567 1705 548 1715 535Z" fill="#008080" />
    <path d="M1345 568L1461 497H1488L1665 535L1666 542L1656 546L1488 510H1461L1357 574L1347 572Z" fill="#d08200" stroke="#4a3000" strokeWidth="0.6" />
    <path d="M1461 497V510M1488 497V510M1658 534V546M1350 570L1357 563" stroke="#3a2a00" strokeWidth="0.7" />
    <path d="M1357 574L1461 510H1488L1656 546L1559 604L1513 608Z" fill="#ffbb00" />

    <Hole x={1380} y={526} rx={16} ry={6} />
    <BigHole x={1353} y={542} rx={13} ry={5} />
    <Hole x={1588} y={505} rx={16} ry={6} />
    <Hole x={1481} y={524} rx={10} ry={4} />
    <BigHole x={1522} y={536} rx={7} ry={3} />
    <BigHole x={1578} y={548} rx={7} ry={3} />
    <Hole x={1626} y={556} rx={10} ry={4} />
    <BigHole x={1658} y={565} rx={13} ry={5} />
    <Hole x={1631} y={581} rx={16} ry={6} />
    <Hole x={1423} y={601} rx={16} ry={5} />
    <Hole x={1387} y={579} rx={9} ry={3} />

    <Hole x={1277} y={445} /><Hole x={1384} y={444} /><Hole x={1325} y={479} /><Hole x={1731} y={488} />
    <Hole x={1239} y={591} /><Hole x={1310} y={624} /><Hole x={1698} y={592} /><Hole x={1612} y={617} />
    <Hole x={1710} y={631} /><Hole x={1569} y={672} /><Hole x={1434} y={698} /><Hole x={1401} y={379} />
    <Hole x={1524} y={342} /><Hole x={1541} y={398} /><Hole x={1791} y={454} /><Hole x={1149} y={554} />
    <Hole x={1012} y={582} />
    <BigHole x={1595} y={364} rx={30} ry={11} />
    <BigHole x={1138} y={629} rx={30} ry={11} />
    <BigHole x={1275} y={608} rx={20} ry={7.500} />

    {/* tool axis, dashed */}
    <path d="M1380 320L1388 582" stroke="#0a0ad0" strokeWidth="3" strokeDasharray="8 8" />
    <path d="M1529 323L1537 602" stroke="#0a0ad0" strokeWidth="3" strokeDasharray="8 8" />
    <path d="M1387 578c2 6-2 10-1 19" stroke="#f0e060" strokeWidth="1.400" fill="none" />
    <path d="M1390 600Q1410 612 1445 618" stroke="#30e070" strokeWidth="0.8" fill="none" />

    {/* WCS */}
    <g fill="none" stroke="#f6e2b0" strokeWidth="1">
      <path d="M1188 269L1243 280L1245 343L1188 331Z" />
      <path d="M1225 263V309L1282 322L1245 343M1227 309L1188 331" />
      <path d="M1227 309L1262 288M1245 343L1290 353" />
    </g>
    <path d="M1185 228L1187 260M1203 259L1223 247L1225 263" stroke="#2828c8" fill="none" />
    <circle cx="1253" cy="293" r="3" fill="#8c8c8c" />
    <path d="M1256 290L1263 288L1257 296Z" fill="#f4f4f4" />
    <path d="M1284 350L1298 355L1285 356Z" fill="#f8f6ec" />
    <text x="1301" y="363" fontSize="14" fill="#f6e2b0" fontFamily="Open Sans, sans-serif">X</text>
    <text x="1262" y="292" fontSize="14" fill="#f6e2b0" fontFamily="Open Sans, sans-serif">Y</text>

    <path d="M1445 228V892" stroke="#686868" strokeWidth="1.200" />
  </svg>
);

const Watermark = () => (
  <div className="absolute left-[686px] top-[569px] flex items-center">
    <svg width="70" height="82" viewBox="0 0 70 82" className="shrink-0 block">
      <path d="M35 0L70 20V62L35 82L0 62V20Z" fill="#8fd2f6" fillOpacity="0.75" />
      <path d="M35 19L53 30V52L35 63L17 52V30Z" fill="#fff" fillOpacity="0.45" />
      <path d="M35 23L50 32L35 41L20 32Z" fill="#b4dff8" />
      <path d="M20 32L35 41V59L20 50Z" fill="#a6d8f6" />
      <path d="M50 32L35 41V59L50 50Z" fill="#7cc4ee" />
    </svg>
    <div className="ml-[9px] flex flex-col text-white/50 font-bold whitespace-nowrap">
      <span className="text-[43px] leading-[48px]">3D世界网</span>
      <span className="text-[14px] leading-[16px] tracking-[2.600px]">WWW.3DSJW.COM</span>
    </div>
  </div>
);

const Graphics = () => (
  <div className="flex-1 flex flex-col">
    <div className="flex h-[25px] bg-white">
      <div className="w-[201px] flex items-center justify-end pr-[21px] text-[16px] text-[#333] whitespace-nowrap overflow-hidden">
        <span>新子板-4轴OP20-.prt</span>
        <span className="ml-[5px]"><S w={12} h={14}><path d="M2 1h6l3 3v9H2z" fill="#fff" stroke="#444" strokeWidth="1.300" /><path d="M6 8l5-4" stroke="#444" /></S></span>
      </div>
      <div className="w-[204px] flex items-center bg-[#55a0b9] text-[15.500px] text-[#e8f4f8] whitespace-nowrap pl-[6px]">
        <S w={16} h={20}><rect x="3" y="1" width="4" height="15" fill="#3a3a90" /><path d="M8 6l7-2M8 10h6M8 13h4" stroke="#e8f4f8" /><circle cx="5" cy="18" r="2" fill="#e0c040" /></S>
        <span className="ml-[4px]">新子板-4轴OP20.prt</span>
        <span className="ml-[7px]"><S w={12} h={14}><path d="M2 1h6l3 3v9H2z" fill="#fff" /><path d="M5 8l5-4" stroke="#333" /></S></span>
        <span className="ml-[5px]"><S w={10} h={10}><path d="M1 1l8 8M9 1L1 9" stroke="#b8d4de" strokeWidth="2.400" /></S></span>
      </div>
    </div>
    <div className="h-[2px] bg-[#6fa9bb]" />
    <div className="relative h-[664px] bg-linear-to-b from-[#b3b4b6] via-[#dcddde] via-65% to-[#e7e8ea] overflow-hidden">
      <Scene />
      <Watermark />
    </div>
  </div>
);

// ---- cut parameters dialog ----
const Select = ({ className = '', children }) => (
  <div className={`h-[27px] bg-white border border-[#ababab] flex items-center justify-between pl-[4px] pr-[7px] text-[15px] text-[#222] ${className}`}>
    <span>{children}</span>
    <span className="w-0 h-0 border-x-[4px] border-x-transparent border-t-[5px] border-t-[#111]" />
  </div>
);
const NumInput = ({ className = '', children }) => (
  <div className={`h-[25px] bg-white border border-[#ababab] flex items-center justify-end pr-[4px] text-[16px] text-[#333] font-['Liberation_Mono',monospace] ${className}`}>{children}</div>
);
const Box = ({ checked }) => (
  <span className="w-[18px] h-[18px] shrink-0 border border-[#555] bg-white flex items-center justify-center">
    {checked && <S w={14} h={14}><path d="M2 7l3.500 4L12 3" stroke="#555" strokeWidth="1.400" fill="none" /></S>}
  </span>
);
const DlgTab = ({ className = '', children }) => (
  <div className={`h-full flex items-center justify-center bg-[#ececec] border border-[#d6d6d6] text-[15px] text-[#222] ${className}`}>{children}</div>
);

const Dialog = () => (
  <div className="absolute left-[591px] top-[124px] w-[380px] h-[438px] bg-[#f0f0f0] flex flex-col">
    <div className="h-[27px] bg-[#589fba] flex items-center pl-[9px] pr-[10px] shrink-0">
      <S w={14} h={14}>
        <circle cx="7" cy="7" r="4" fill="none" stroke="#fff" strokeWidth="2.600" />
        <path d="M7 0v2.500M7 11.500V14M0 7h2.500M11.500 7H14M2 2l2 2M10 10l2 2M12 2l-2 2M4 10l-2 2" stroke="#fff" strokeWidth="2" />
      </S>
      <span className="ml-[9px] text-[18px] text-white leading-[27px]">切削参数</span>
      <span className="ml-auto"><S w={12} h={12}><path d="M1 1l10 10M11 1L1 11" stroke="#fff" strokeWidth="2" /></S></span>
    </div>
    <div className="flex h-[31px] mt-[11px] ml-[12px] shrink-0">
      <DlgTab className="w-[119px]">策略</DlgTab>
      <DlgTab className="w-[119px]">余量</DlgTab>
      <DlgTab className="w-[117px]">拐角</DlgTab>
    </div>
    <div className="flex h-[31px] ml-[11px] shrink-0">
      <div className="w-[115px] h-[35px] -mt-[3px] bg-white border border-[#cfcfcf] border-b-0 p-[2px] z-10 shrink-0">
        <div className="h-full border border-dotted border-[#222] flex items-center justify-center text-[15px] text-[#222]">连接</div>
      </div>
      <DlgTab className="w-[130px]">空间范围</DlgTab>
      <DlgTab className="w-[111px]">更多</DlgTab>
    </div>
    <div className="ml-[11px] w-[358px] h-[287px] bg-white border border-[#bcbcbc] shrink-0 flex flex-col">
      <div className="h-[32px] flex items-center justify-between pl-[10px] pr-[11px] shrink-0">
        <span className="text-[18px] text-[#3c89a3]">层之间</span>
        <S w={16} h={12}><path d="M2 10l6-7 6 7" stroke="#1c6d86" strokeWidth="2.600" fill="none" /></S>
      </div>
      <div className="flex items-center justify-between h-[27px] mt-[4px] pl-[12px] pr-[12px] shrink-0 text-[15px] text-[#222]">
        <span>层到层</span><Select className="w-[152px]">沿部件交叉斜进刀</Select>
      </div>
      <div className="flex items-center justify-between h-[25px] mt-[3px] pl-[12px] pr-[12px] shrink-0 text-[15px] text-[#222]">
        <span>斜坡角</span><NumInput className="w-[90px]">10.0000</NumInput>
      </div>
      <div className="flex items-center h-[18px] mt-[6px] pl-[12px] shrink-0 text-[15px] text-[#222]">
        <Box checked /><span className="ml-[4px]">层间切削</span>
      </div>
      <div className="flex items-center justify-between h-[27px] mt-[5px] pl-[12px] pr-[12px] shrink-0 text-[15px] text-[#222]">
        <span>步距</span><Select className="w-[152px]">恒定</Select>
      </div>
      <div className="flex items-center h-[27px] mt-[3px] pl-[12px] pr-[12px] shrink-0 text-[15px] text-[#222]">
        <span>最大距离</span>
        <NumInput className="w-[89px] ml-auto">3.0000</NumInput>
        <Select className="w-[71px] ml-[3px]">mm</Select>
      </div>
      <div className="flex items-center h-[18px] mt-[6px] pl-[12px] shrink-0 text-[15px] text-[#222]">
        <Box /><span className="ml-[4px]">短距离移动时的进给</span>
      </div>
      <div className="mt-[12px] mx-[4px] h-[2px] bg-[#e0e0e0] shrink-0" />
    </div>
    <div className="flex justify-end gap-[5px] pr-[16px] mt-[13px]">
      <button className="w-[60px] h-[28px] bg-[#75b1c8] text-white text-[15px]">确定</button>
      <button className="w-[60px] h-[28px] bg-[#e1e1e1] border border-[#adadad] text-[#222] text-[15px]">取消</button>
    </div>
  </div>
);

const Arrows = () => (
  <svg width="1828" height="892" viewBox="0 0 1828 892" className="absolute left-0 top-0 pointer-events-none">
    <path d="M287 649L663 353L660 348L684 343L672 365L668 362L289 650Z" fill="#7c0000" />
    <path d="M907 359L1303 537L1312 534L1333 553L1304 554L1302 545L907 360Z" fill="#7c0000" />
  </svg>
);

export default function App() {
  return (
    <div className="relative w-[1828px] h-[892px] overflow-hidden bg-white font-['Open_Sans','Noto_Sans_CJK_SC',sans-serif]">
      <TitleBar />
      <TabBar />
      <Ribbon />
      <Toolbar />
      <div className="flex h-[691px]">
        <Navigator />
        <Graphics />
      </div>
      <Dialog />
      <Arrows />
    </div>
  );
}
